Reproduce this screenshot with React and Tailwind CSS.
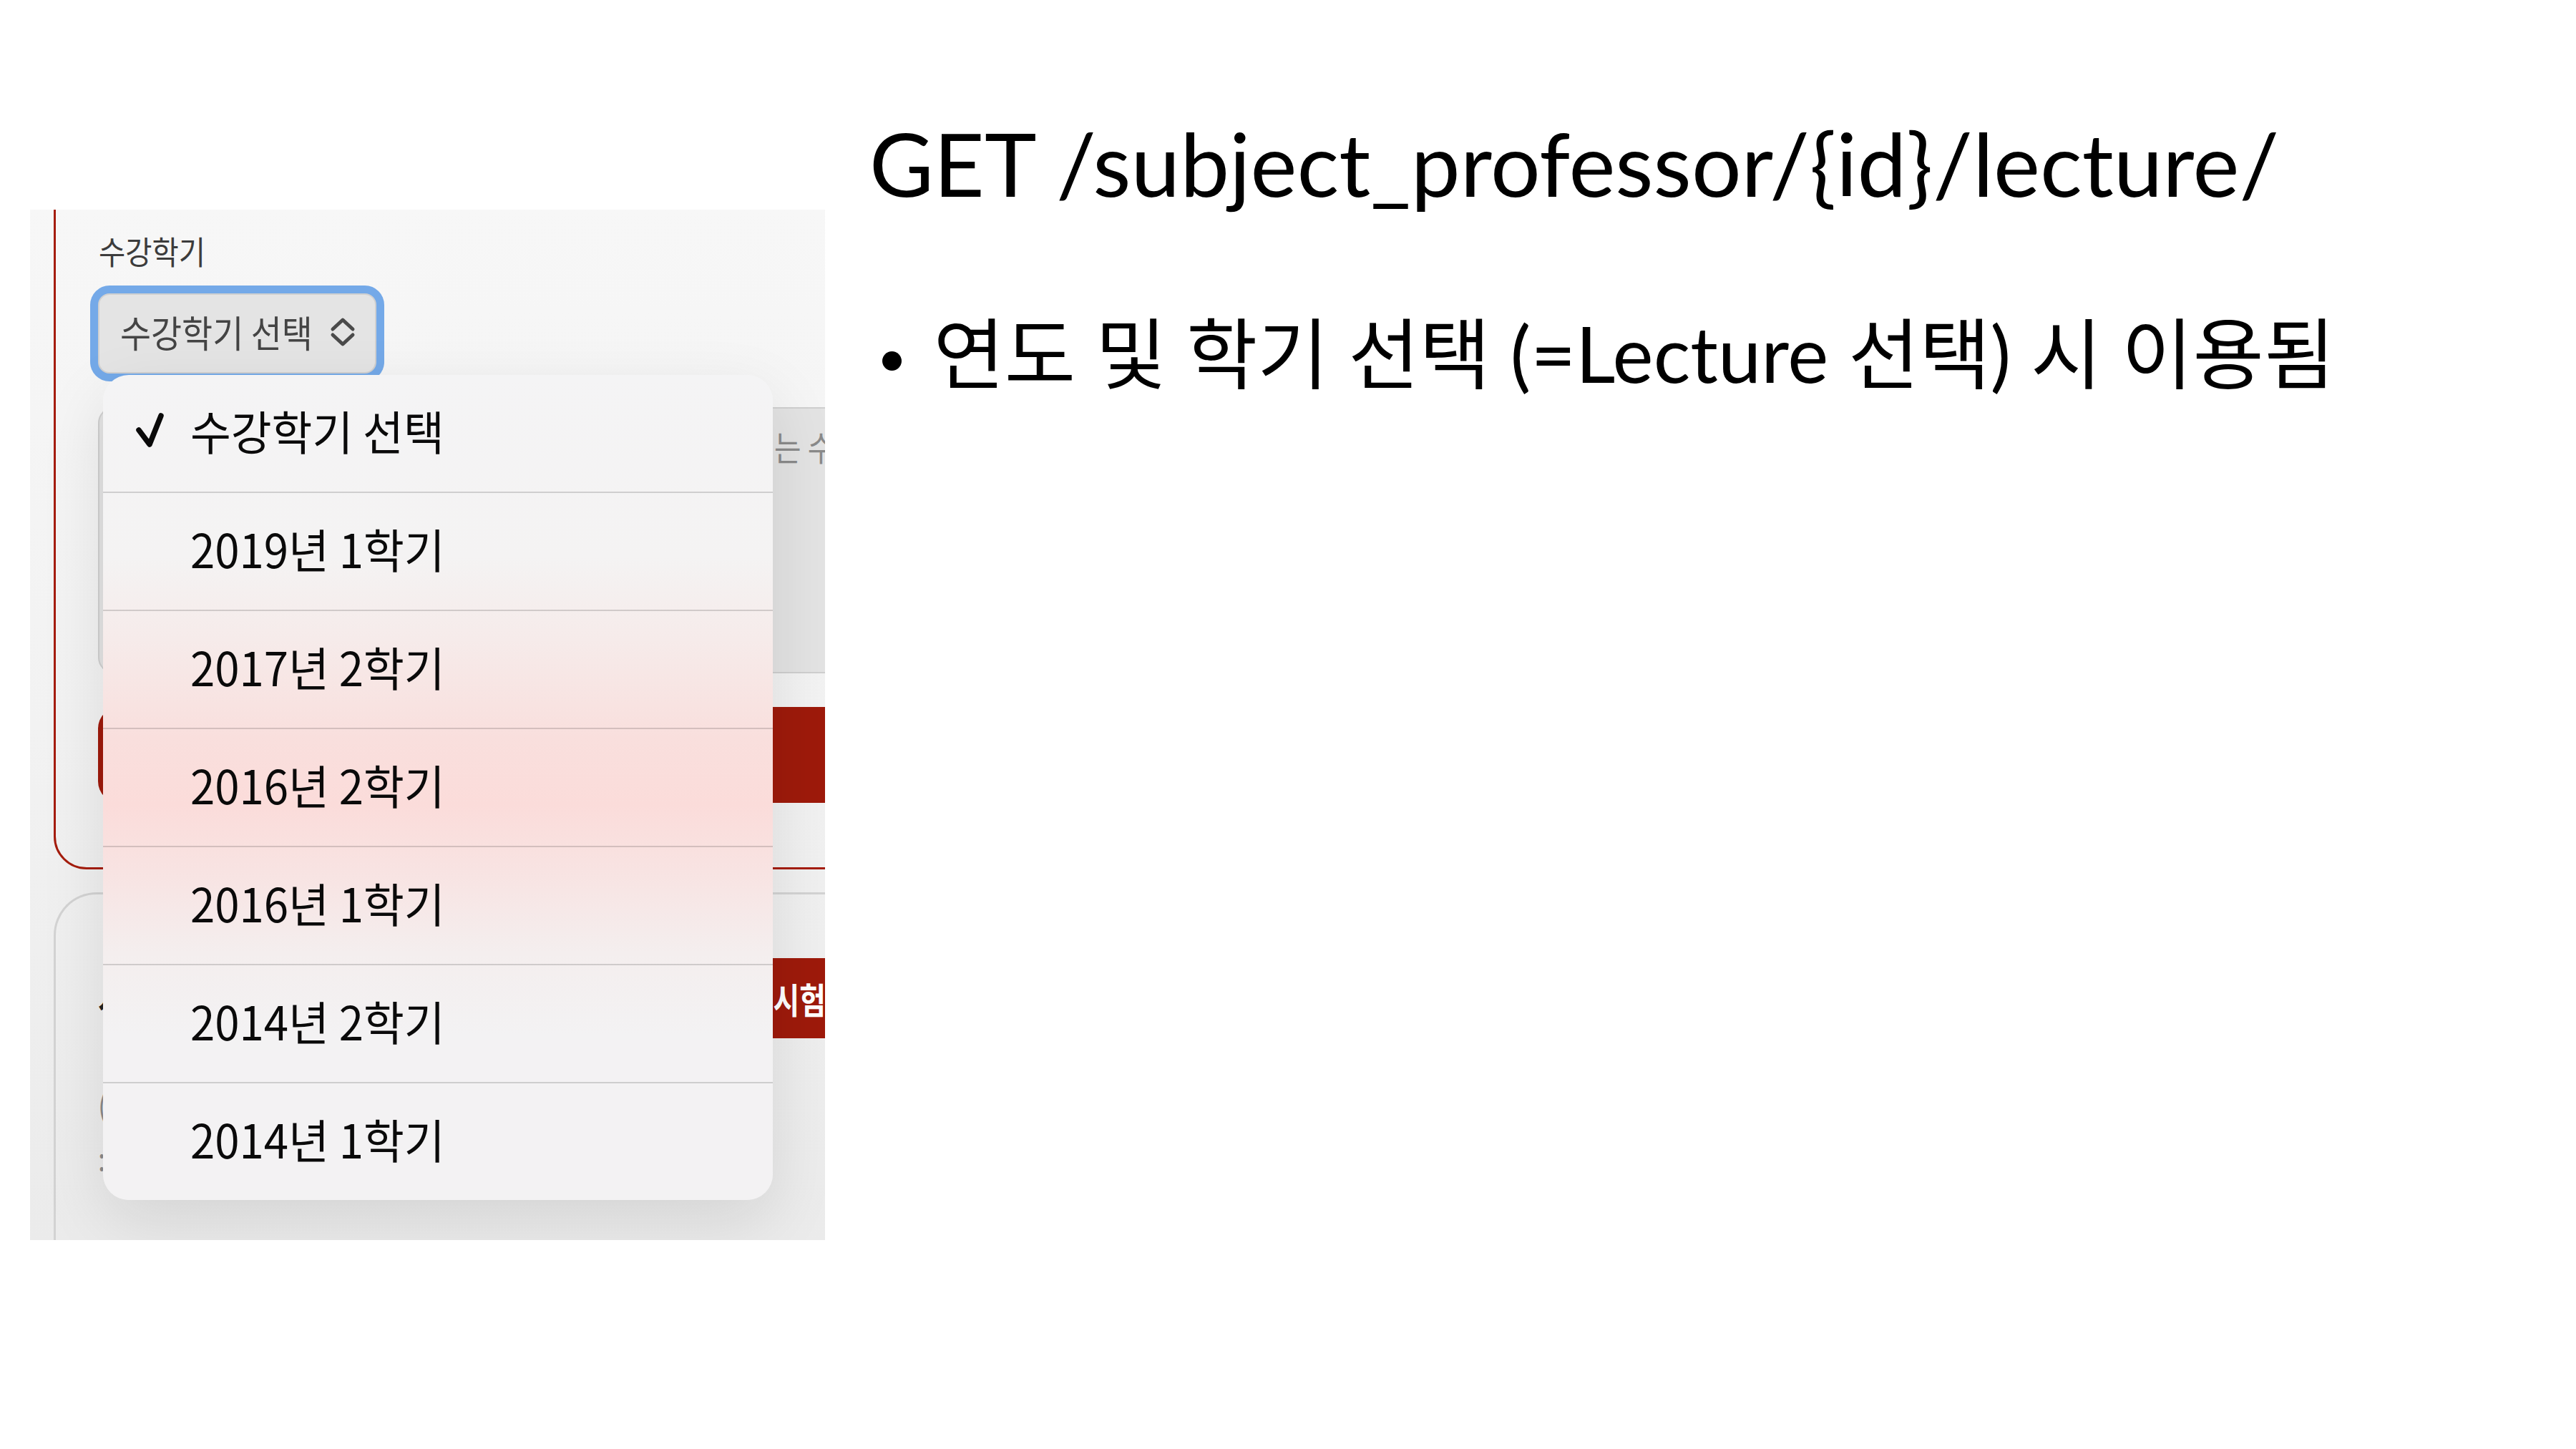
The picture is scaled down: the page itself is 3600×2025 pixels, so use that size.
import React from "react";

const KR = { fontFamily: '"Noto Sans CJK KR", sans-serif' };
const SLIDE = { fontFamily: 'Lato, "Noto Sans CJK KR", sans-serif' };

function Squeeze({ w, s, children, className = "" }) {
  return (
    <span className={`inline-block whitespace-nowrap ${w} ${className}`}>
      <span className={`inline-block origin-left ${s}`}>{children}</span>
    </span>
  );
}

function Check() {
  return (
    <svg width="44" height="50" viewBox="0 0 44 50" className="block">
      <path d="M6 25 L21 45 L37 5" fill="none" stroke="#0a0a0a" strokeWidth="7.5" strokeLinecap="round" strokeLinejoin="round" />
    </svg>
  );
}

function UpDown() {
  return (
    <svg width="36" height="42" viewBox="0 0 36 42" className="block">
      <path d="M4 17 L18 4 L32 17" fill="none" stroke="#4a4a4a" strokeWidth="5" strokeLinecap="round" strokeLinejoin="round" />
      <path d="M4 25 L18 38 L32 25" fill="none" stroke="#4a4a4a" strokeWidth="5" strokeLinecap="round" strokeLinejoin="round" />
    </svg>
  );
}

const items = ["수강학기 선택", "2019년 1학기", "2017년 2학기", "2016년 2학기", "2016년 1학기", "2014년 2학기", "2014년 1학기"];

function Menu() {
  return (
    <div
      className="absolute left-[101.5px] top-[231px] w-[936.5px] rounded-[36px] overflow-hidden flex flex-col shadow-[0_30px_90px_rgba(0,0,0,0.10)] bg-[linear-gradient(180deg,#f4f4f5_0%,#f4f3f3_22%,#f6ebea_32%,#f9dfdd_44%,#fbdcda_52%,#f8e3e2_60%,#f4eeee_70%,#f3f2f3_80%,#f3f2f3_100%)]"
      style={KR}
    >
      {items.map((t, i) => (
        <React.Fragment key={t}>
          {i > 0 && <div className="h-[2px] bg-black/15" />}
          <div className="h-[163px] flex items-center pb-[9px]">
            <div className="w-[122.5px] pl-[44px] flex items-center">{i === 0 && <Check />}</div>
            <Squeeze w="w-[380px]" s="scale-x-[0.95]" className="text-[65px] leading-none text-[#0a0a0a]">
              {t}
            </Squeeze>
          </div>
        </React.Fragment>
      ))}
    </div>
  );
}

function Screenshot() {
  return (
    <div className="relative w-[1111px] h-[1440px] overflow-hidden bg-[linear-gradient(180deg,#f7f7f7_0%,#f2f2f2_50%,#ebebeb_100%)]" style={KR}>
      <div className="pl-[33px] -mt-[40px] -mr-[100px] flex flex-col">
        {/* card 1 */}
        <div className="border-[3px] border-[#a51d0d] rounded-bl-[46px] pl-[59px] pt-[72px] pb-[90px] flex flex-col">
          <Squeeze w="w-[160px]" s="scale-x-[0.9]" className="ml-[1px] h-[46px] text-[45px] leading-none text-[#3c3c3c]">
            수강학기
          </Squeeze>
          <div className="mt-[36px] w-[389px] h-[112px] rounded-[16px] bg-[#e4e4e4] border-2 border-[#d0d0d0] ring-[11px] ring-[#74a9e8] flex items-center pl-[29px] pb-[4px]">
            <Squeeze w="w-[293px]" s="scale-x-[0.9]" className="text-[52px] leading-none text-[#444444]">
              수강학기 선택
            </Squeeze>
            <UpDown />
          </div>
          <div className="mt-[47px] h-[372px] rounded-l-[22px] bg-[#e3e3e3] border-2 border-r-0 border-[#cfcfcf] pt-[28px]">
            <Squeeze w="w-[300px]" s="scale-x-[0.85]" className="ml-[943px] text-[48px] leading-none text-[#8a8a8a]">
              는 수업
            </Squeeze>
          </div>
          <div className="mt-[47px] h-[134px] rounded-l-[30px] bg-[#9e1a0b]" />
        </div>
        {/* card 2 */}
        <div className="mt-[32px] border-[3px] border-r-0 border-b-0 border-[#d3d3d3] rounded-tl-[60px] h-[600px] pl-[59px] pt-[89px] flex flex-col">
          <div className="flex items-center h-[112px]">
            <Squeeze w="w-[300px]" s="scale-x-[0.85]" className="text-[50px] leading-none font-bold text-[#222]">
              시험 정보
            </Squeeze>
            <div className="ml-auto h-[112px] w-[500px] rounded-l-[24px] bg-[#9e1a0b] flex items-center justify-end pr-[99px]">
              <span className="text-[50px] leading-none font-bold text-white whitespace-nowrap inline-block origin-right scale-x-[0.8]">모의시험</span>
            </div>
          </div>
          <Squeeze w="w-[400px]" s="scale-x-[0.85]" className="mt-[70px] text-[44px] leading-none text-[#8a8a8a]">
            (2019년 1학기)
          </Squeeze>
          <Squeeze w="w-[400px]" s="scale-x-[0.85]" className="mt-[30px] text-[44px] leading-none text-[#8a8a8a]">
            : 객관식 문항
          </Squeeze>
        </div>
      </div>
      <Menu />
    </div>
  );
}

export default function App() {
  return (
    <div className="w-[3600px] h-[2025px] bg-white flex items-start overflow-hidden">
      <div className="ml-[42px] mt-[293px]">
        <Screenshot />
      </div>
      <div className="ml-[62px] flex flex-col text-black" style={SLIDE}>
        <div className="mt-[166px] text-[123px] leading-none whitespace-nowrap">GET /subject_professor/{"{id}"}/lecture/</div>
        <div className="mt-[150px] flex items-start">
          <div className="ml-[17.5px] mt-[52px] w-[27px] h-[27px] rounded-full bg-black shrink-0" />
          <div className="ml-[45px] text-[108px] leading-none whitespace-nowrap">연도 및 학기 선택 (=Lecture 선택) 시 이용됨</div>
        </div>
      </div>
    </div>
  );
}
